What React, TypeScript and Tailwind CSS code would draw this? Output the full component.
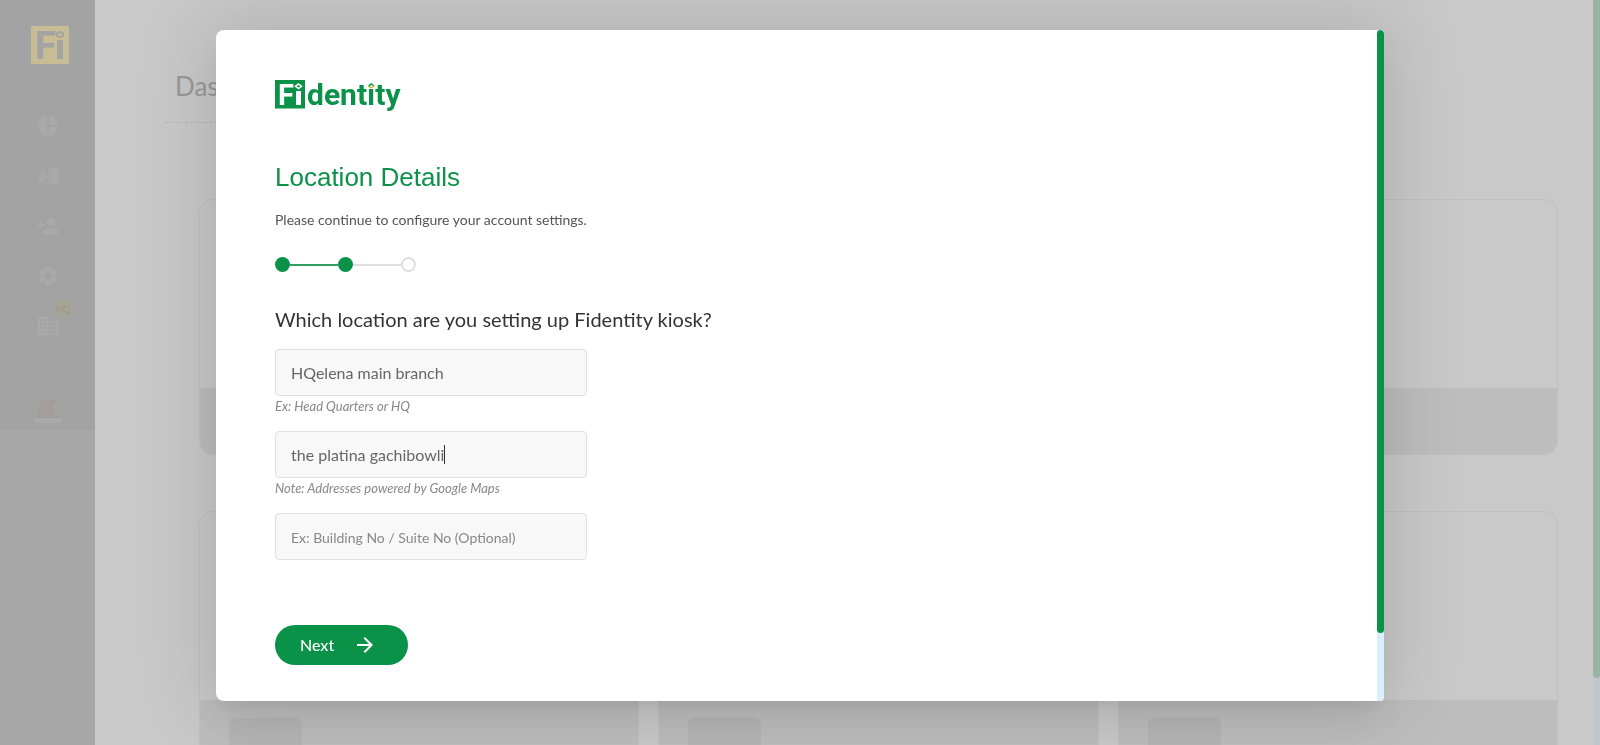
import { MdPieChart, MdPersonAdd, MdSettings, MdBusiness, MdArrowForward } from "react-icons/md";

function Mark({ className, box, letter }: { className: string; box: string; letter: string }) {
  return (
    <svg viewBox="0 -6 38 50" className={className} role="img" aria-label="Fi">
      <rect width="38" height="38" rx="1" fill={box} />
      <text x="4" y="33" fontFamily="Roboto" fontWeight="700" fontSize="38" fill={letter}>F</text>
      <rect x="26" y="14" width="6" height="19" fill={letter} />
      <ellipse cx="29" cy="8.500" rx="3.200" ry="2.400" fill={box} stroke={letter} strokeWidth="1.800" />
    </svg>
  );
}

function DoorIcon() {
  return (
    <svg viewBox="0 0 24 22" className="h-[22px] w-6" fill="currentColor" aria-hidden="true">
      <circle cx="7" cy="6" r="1.700" />
      <path d="M5 8.500 8 8l1.800 3 2 1-.6 1.300-2.400-1-.8 2.200 1.600 2v4H8v-3.300l-2-2-.8 2.700L2.300 20.500 1 19.300l2.400-2.800L5 10.300l-1.200.7-.4 2.300-1.400-.2.500-3.300z" />
      <path d="M12.500 2 17 1v1.300l-3 .7v17h-1.500zM15.500 3l7.500-.5V19l-7.500 1.300z" />
    </svg>
  );
}

function Siren() {
  return (
    <svg viewBox="0 0 40 38" className="h-[38px] w-10" aria-hidden="true">
      <path d="M20 1v7M8 5l4 5M32 5l-4 5M1 20h6M33 20h6" stroke="#a0a0a0" strokeWidth="1" />
      <path d="M9 32 12 15q.5-1 2-1h12q1.500 0 2 1l3 17z" fill="#a59d9c" />
      <path d="M26 19h2l1.500 9h-2z" fill="#a9a8a8" />
      <rect x="6" y="32" width="28" height="5" rx="2" fill="#aaaaaa" />
    </svg>
  );
}

function Sidebar() {
  return (
    <aside className="w-[95px] shrink-0 bg-[#a7a7a7]">
      <div className="flex h-[430px] flex-col items-center bg-[#a3a3a3] pt-5 text-[#a9a9a9]">
        <Mark className="ml-[5px] h-[50px] w-[38px]" box="#c8bc95" letter="#a3a3a3" />
        <nav className="mt-11 flex flex-col items-center gap-[26px]">
          <a href="#reports" aria-label="Reports"><MdPieChart className="size-6" /></a>
          <a href="#visits" aria-label="Visits" className="flex h-6 items-center"><DoorIcon /></a>
          <a href="#people" aria-label="People"><MdPersonAdd className="size-6" /></a>
          <a href="#settings" aria-label="Settings"><MdSettings className="size-6" /></a>
          <a href="#locations" aria-label="Locations" className="relative">
            <MdBusiness className="size-6" />
            <span className="absolute -top-[14px] left-[18px] flex size-[19px] items-center justify-center rounded-full bg-[#a6a496] text-[9px] text-[#9b998e]">HQ</span>
          </a>
        </nav>
        <div className="mt-12"><Siren /></div>
      </div>
    </aside>
  );
}

function Card({ tall }: { tall?: boolean }) {
  return (
    <section className={tall ? "flex h-80 flex-col overflow-hidden rounded-[14px] border border-[#c0c0c0]" : "flex h-64 flex-col overflow-hidden rounded-[14px] border border-[#c0c0c0]"}>
      <div className="h-[188px]" />
      <div className="flex-1 bg-[#bdbdbd] px-[29px] pt-[18px]">
        {tall && <div className="h-10 w-[73px] rounded-md bg-[#b5b5b5]" />}
      </div>
    </section>
  );
}

function Field({ id, label, value, placeholder, note, caret }: { id: string; label: string; value?: string; placeholder?: string; note?: string; caret?: boolean }) {
  return (
    <div className="relative h-[82px]">
      <input
        id={id}
        aria-label={label}
        defaultValue={value}
        placeholder={placeholder}
        className="block h-[47px] w-[312px] rounded border border-[#e0e0e0] bg-[#f8f8f8] px-[15px] text-base text-[#666] outline-none placeholder:text-sm placeholder:text-[#888]"
      />
      {caret && (
        <div aria-hidden="true" className="pointer-events-none absolute top-[14px] left-4 flex h-[19px]">
          <span className="invisible whitespace-pre">{value}</span>
          <span className="w-px bg-[#333]" />
        </div>
      )}
      {note && <label htmlFor={id} className="block text-[13px] leading-5 text-[#888] italic">{note}</label>}
    </div>
  );
}

function Steps() {
  return (
    <div className="flex items-center" aria-label="Step 2 of 3">
      <span className="size-[15px] rounded-full bg-[#0b9249]" />
      <span className="h-[2px] w-12 bg-[#2f9f62]" />
      <span className="size-[15px] rounded-full bg-[#0b9249]" />
      <span className="h-[2px] w-12 bg-[#e0e0e0]" />
      <span className="size-[15px] rounded-full border-2 border-[#dedede]" />
    </div>
  );
}

function Logo() {
  return (
    <svg viewBox="0 -6 128 40" className="h-10 w-32" role="img" aria-label="Fidentity">
      <rect width="30" height="28.500" fill="#0b9249" />
      <text y="25" fontFamily="Roboto" fontWeight="700">
        <tspan x="3" fontSize="29" fill="#fff">F</tspan>
        <tspan x="32" fontSize="30" fill="#0b9249">dentıty</tspan>
      </text>
      <rect x="21" y="11" width="5" height="14" fill="#fff" />
      <path d="M23.500 4 26.500 6.300 23.500 8.600 20.500 6.300Z" fill="none" stroke="#fff" strokeWidth="1.500" />
      <path d="M93.500 6.200 96.200 4l3 2" fill="none" stroke="#0b9249" strokeWidth="1.500" />
      <path d="M93.500 5.800 96.200 8" fill="none" stroke="#8bbf3f" strokeWidth="1.500" />
      <path d="M96.200 8 99.200 5.800" fill="none" stroke="#f2b51d" strokeWidth="1.500" />
    </svg>
  );
}

export default function App() {
  return (
    <div className="relative h-screen overflow-hidden bg-[#c9c9c9] font-['Lato',sans-serif]">
      <div className="flex h-full">
        <Sidebar />
        <main className="min-w-0 flex-1 pt-[68px] pr-[35px] pl-[70px]">
          <header className="w-1/2 border-b border-dashed border-[#b5b5b5] pb-[18px] pl-[10px]">
            <h1 className="text-[26px] leading-9 text-[#999]">Dashboard</h1>
          </header>
          <div className="mt-[76px] grid grid-cols-3 gap-x-[19px] gap-y-14 pl-[34px]">
            <Card />
            <Card />
            <Card />
            <Card tall />
            <Card tall />
            <Card tall />
          </div>
        </main>
        <div className="w-[7px] shrink-0 bg-[#c1c6ca]">
          <div className="h-[91%] rounded-b bg-[#99b4a5]" />
        </div>
      </div>

      <div className="fixed inset-0 flex items-start justify-center pt-[30px]">
        <div role="dialog" aria-modal="true" aria-labelledby="dialog-title" className="flex h-[90vh] w-[73%] overflow-hidden rounded-l-lg rounded-r bg-white shadow-[0_11px_15px_-7px_rgba(0,0,0,0.06),0_24px_38px_3px_rgba(0,0,0,0.04),0_0_70px_14px_rgba(0,0,0,0.11)]">
          <form className="flex-1 pt-11 pl-[59px]" onSubmit={(e) => e.preventDefault()}>
            <Logo />
            <h2 id="dialog-title" className="mt-[47px] font-['Liberation_Sans',sans-serif] text-[26px] leading-8 text-[#0b9249]">Location Details</h2>
            <p className="mt-[17px] mb-[27px] text-sm leading-5 text-[#555]">Please continue to configure your account settings.</p>
            <Steps />
            <h3 className="mt-[33px] mb-4 text-xl leading-7 text-[#333]">Which location are you setting up Fidentity kiosk?</h3>
            <Field id="name" label="Location name" value="HQelena main branch" note="Ex: Head Quarters or HQ" />
            <Field id="address" label="Address" value="the platina gachibowli" note="Note: Addresses powered by Google Maps" caret />
            <Field id="suite" label="Building or suite" placeholder="Ex: Building No / Suite No (Optional)" />
            <button type="submit" className="mt-[30px] flex h-10 w-[133px] items-center gap-[19px] rounded-full bg-[#0b9249] pl-[25px] text-base font-medium text-white">
              Next
              <MdArrowForward className="size-6" />
            </button>
          </form>
          <div className="w-[7px] bg-[#dbeefd]">
            <div className="h-[90%] rounded-full bg-[#0b9249]" />
          </div>
        </div>
      </div>
    </div>
  );
}
